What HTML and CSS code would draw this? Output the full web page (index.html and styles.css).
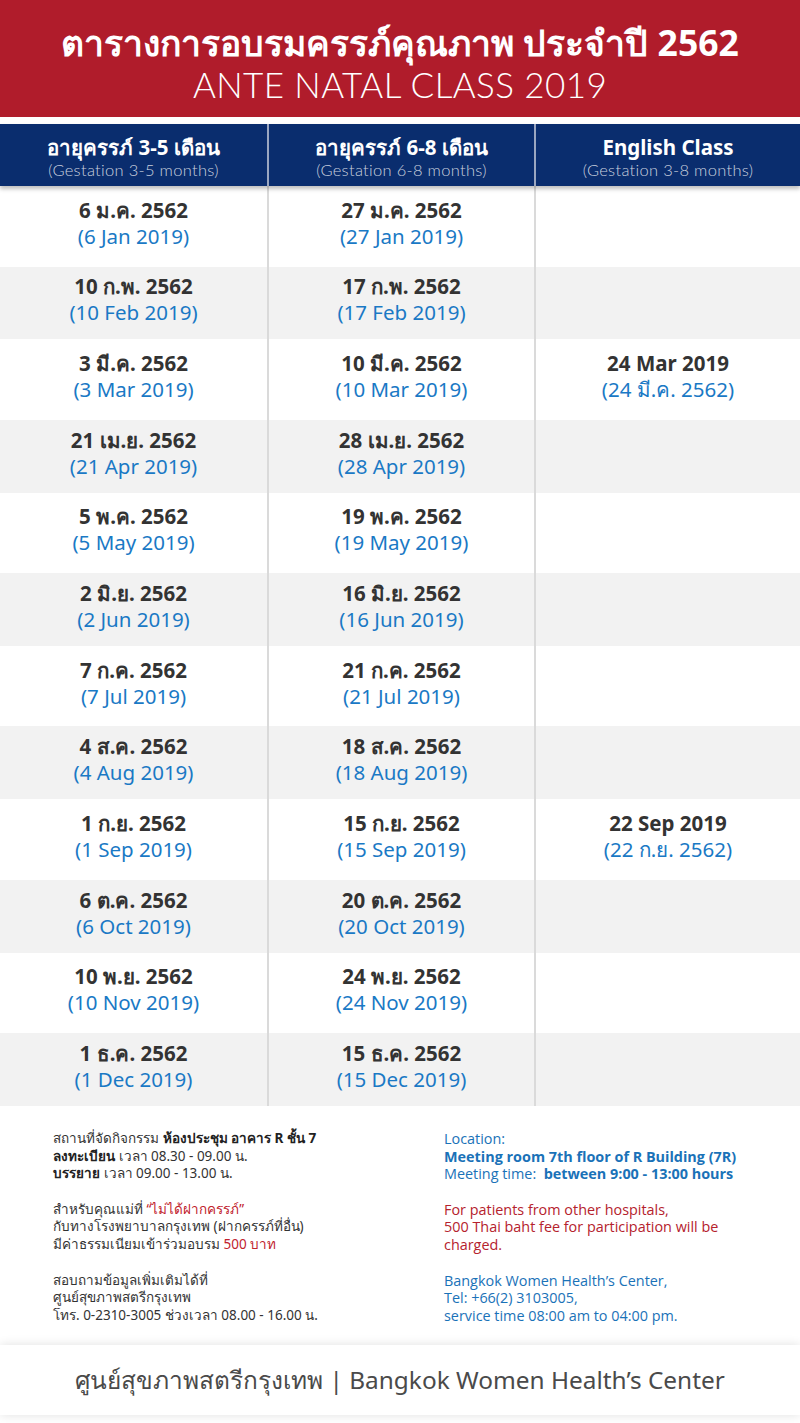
FILE: index.html
```html
<!DOCTYPE html>
<html lang="th">
<head>
<meta charset="utf-8">
<title>Ante Natal Class 2019</title>
<link rel="stylesheet" href="styles.css">
</head>
<body>
<div class="page">
  <header class="banner">
    <h1 class="title">ตารางการอบรมครรภ์คุณภาพ ประจำปี 2562</h1>
    <p class="subtitle">ANTE NATAL CLASS 2019</p>
  </header>

  <div class="thead">
    <div class="th"><span class="th-main">อายุครรภ์ 3-5 เดือน</span><span class="th-sub">(Gestation 3-5 months)</span></div>
    <div class="th"><span class="th-main">อายุครรภ์ 6-8 เดือน</span><span class="th-sub">(Gestation 6-8 months)</span></div>
    <div class="th"><span class="th-main">English Class</span><span class="th-sub">(Gestation 3-8 months)</span></div>
  </div>

  <div class="tbody">
    <div class="row">
      <div class="cell"><b>6 ม.ค. 2562</b><span>(6 Jan 2019)</span></div>
      <div class="cell"><b>27 ม.ค. 2562</b><span>(27 Jan 2019)</span></div>
      <div class="cell"></div>
    </div>
    <div class="row alt">
      <div class="cell"><b>10 ก.พ. 2562</b><span>(10 Feb 2019)</span></div>
      <div class="cell"><b>17 ก.พ. 2562</b><span>(17 Feb 2019)</span></div>
      <div class="cell"></div>
    </div>
    <div class="row">
      <div class="cell"><b>3 มี.ค. 2562</b><span>(3 Mar 2019)</span></div>
      <div class="cell"><b>10 มี.ค. 2562</b><span>(10 Mar 2019)</span></div>
      <div class="cell"><b>24 Mar 2019</b><span>(24 มี.ค. 2562)</span></div>
    </div>
    <div class="row alt">
      <div class="cell"><b>21 เม.ย. 2562</b><span>(21 Apr 2019)</span></div>
      <div class="cell"><b>28 เม.ย. 2562</b><span>(28 Apr 2019)</span></div>
      <div class="cell"></div>
    </div>
    <div class="row">
      <div class="cell"><b>5 พ.ค. 2562</b><span>(5 May 2019)</span></div>
      <div class="cell"><b>19 พ.ค. 2562</b><span>(19 May 2019)</span></div>
      <div class="cell"></div>
    </div>
    <div class="row alt">
      <div class="cell"><b>2 มิ.ย. 2562</b><span>(2 Jun 2019)</span></div>
      <div class="cell"><b>16 มิ.ย. 2562</b><span>(16 Jun 2019)</span></div>
      <div class="cell"></div>
    </div>
    <div class="row">
      <div class="cell"><b>7 ก.ค. 2562</b><span>(7 Jul 2019)</span></div>
      <div class="cell"><b>21 ก.ค. 2562</b><span>(21 Jul 2019)</span></div>
      <div class="cell"></div>
    </div>
    <div class="row alt">
      <div class="cell"><b>4 ส.ค. 2562</b><span>(4 Aug 2019)</span></div>
      <div class="cell"><b>18 ส.ค. 2562</b><span>(18 Aug 2019)</span></div>
      <div class="cell"></div>
    </div>
    <div class="row">
      <div class="cell"><b>1 ก.ย. 2562</b><span>(1 Sep 2019)</span></div>
      <div class="cell"><b>15 ก.ย. 2562</b><span>(15 Sep 2019)</span></div>
      <div class="cell"><b>22 Sep 2019</b><span>(22 ก.ย. 2562)</span></div>
    </div>
    <div class="row alt">
      <div class="cell"><b>6 ต.ค. 2562</b><span>(6 Oct 2019)</span></div>
      <div class="cell"><b>20 ต.ค. 2562</b><span>(20 Oct 2019)</span></div>
      <div class="cell"></div>
    </div>
    <div class="row">
      <div class="cell"><b>10 พ.ย. 2562</b><span>(10 Nov 2019)</span></div>
      <div class="cell"><b>24 พ.ย. 2562</b><span>(24 Nov 2019)</span></div>
      <div class="cell"></div>
    </div>
    <div class="row alt">
      <div class="cell"><b>1 ธ.ค. 2562</b><span>(1 Dec 2019)</span></div>
      <div class="cell"><b>15 ธ.ค. 2562</b><span>(15 Dec 2019)</span></div>
      <div class="cell"></div>
    </div>
  </div>

  <section class="info">
    <div class="info-th">
      <p>สถานที่จัดกิจกรรม <b>ห้องประชุม อาคาร R ชั้น 7</b><br>
      <b>ลงทะเบียน</b> เวลา 08.30 - 09.00 น.<br>
      <b>บรรยาย</b> เวลา 09.00 - 13.00 น.</p>
      <p>สำหรับคุณแม่ที่ <span class="red">“ไม่ได้ฝากครรภ์”</span><br>
      กับทางโรงพยาบาลกรุงเทพ (ฝากครรภ์ที่อื่น)<br>
      มีค่าธรรมเนียมเข้าร่วมอบรม <span class="red">500 บาท</span></p>
      <p>สอบถามข้อมูลเพิ่มเติมได้ที่<br>
      ศูนย์สุขภาพสตรีกรุงเทพ<br>
      โทร. 0-2310-3005 ช่วงเวลา 08.00 - 16.00 น.</p>
    </div>
    <div class="info-en">
      <p>Location:<br>
      <b>Meeting room 7th floor of R Building (7R)</b><br>
      Meeting time:&nbsp; <b>between 9:00 - 13:00 hours</b></p>
      <p class="red">For patients from other hospitals,<br>
      500 Thai baht fee for participation will be<br>
      charged.</p>
      <p>Bangkok Women Health’s Center,<br>
      Tel: +66(2) 3103005,<br>
      service time 08:00 am to 04:00 pm.</p>
    </div>
  </section>

  <footer class="bottom">ศูนย์สุขภาพสตรีกรุงเทพ | Bangkok Women Health’s Center</footer>
</div>
</body>
</html>
```

FILE: styles.css
```css
* { box-sizing: border-box; }
html, body { margin: 0; padding: 0; }
body {
  background: #f4f4f4;
  font-family: "Noto Sans", "Open Sans", sans-serif;
  color: #333;
}
.page {
  width: 800px;
  background: #fff;
  overflow: hidden;
}
.banner {
  background: #b01c2b;
  color: #fff;
  height: 117px;
  text-align: center;
  padding-top: 21px;
}
.title {
  margin: 0 0 4px;
  font-size: 35.5px;
  line-height: 42px;
  font-weight: 700;
}
.subtitle {
  margin: 0;
  font-family: Lato, "Noto Sans", sans-serif;
  font-weight: 300;
  font-size: 35px;
  line-height: 34px;
  letter-spacing: 0.4px;
}
.thead {
  margin-top: 7px;
  background: #0a2d6e;
  height: 62px;
  display: grid;
  grid-template-columns: 267px 267px 266px;
  box-shadow: 0 3px 4px rgba(0,0,0,0.25);
  position: relative;
  z-index: 1;
}
.th {
  display: flex;
  flex-direction: column;
  align-items: center;
  justify-content: flex-start;
  padding-top: 11px;
  color: #fff;
}
.th + .th { border-left: 2px solid #9aa6c0; }
.th-main {
  font-size: 20.5px;
  font-weight: 700;
  line-height: 24px;
}
.th-sub {
  font-size: 16.5px;
  font-weight: 300;
  line-height: 22px;
  color: #c9d0de;
  font-family: Lato, "Noto Sans", sans-serif;
  letter-spacing: 0.3px;
}
.row {
  display: grid;
  grid-template-columns: 267px 267px 266px;
  height: 80.5px;
  background: #fff;
}
.row.alt {
  height: 72.84px;
  background: #f2f2f2;
}
.cell {
  display: flex;
  flex-direction: column;
  align-items: center;
  justify-content: center;
  font-size: 20.5px;
  line-height: 26px;
  padding-bottom: 7px;
}
.cell + .cell { border-left: 2px solid #dadada; }
.cell b { color: #333; font-weight: 700; }
.cell span { color: #1a79c5; }
.info {
  display: grid;
  grid-template-columns: 391px 1fr;
  padding: 24px 0 0 53px;
  height: 239px;
  font-size: 13.5px;
  line-height: 17.6px;
}
.info p { margin: 0 0 18px; }
.info-th { color: #333; }
.info-th b { color: #222; }
.info-en {
  color: #1a72b8;
  font-family: "Open Sans", "Noto Sans", sans-serif;
  font-size: 14.4px;
}
.info-th .red { color: #c1222d; }
.info-en .red { color: #b5222d; }
.bottom {
  height: 70px;
  line-height: 70px;
  text-align: center;
  font-size: 24.4px;
  color: #4a4a4a;
  background: #fff;
  box-shadow: 0 0 10px rgba(0,0,0,0.12);
  margin-bottom: 8px;
}
```
